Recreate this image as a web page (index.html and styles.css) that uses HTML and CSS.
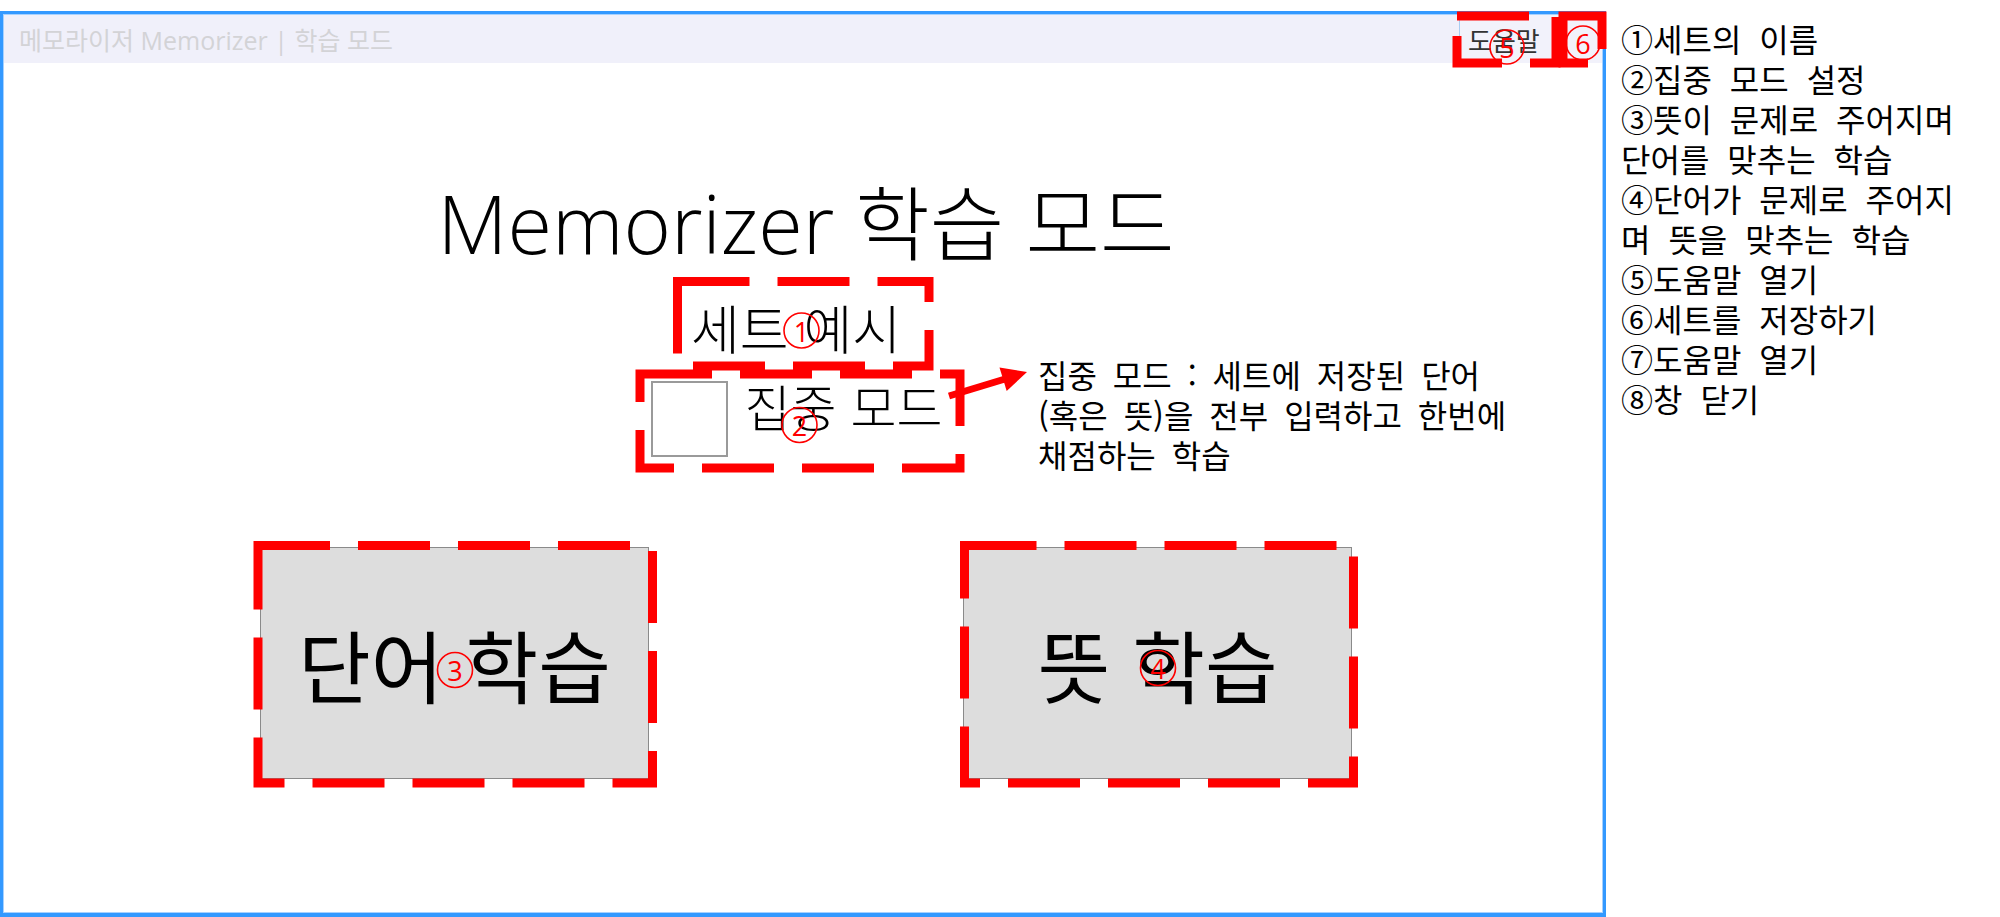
FILE: index.html
```html
<!DOCTYPE html>
<html lang="ko">
<head>
<meta charset="utf-8">
<title>Memorizer 학습 모드</title>
<link rel="stylesheet" href="styles.css">
</head>
<body>
<div class="page">
  <div class="window">
    <div class="titlebar">
      <span class="app-title">메모라이저 Memorizer | 학습 모드</span>
      <button class="help">도움말</button>
      <button class="save" aria-label="세트 저장"></button>
    </div>
    <main class="content">
      <h1 class="title">Memorizer 학습 모드</h1>
      <div class="set-name">세트 예시</div>
      <label class="focus"><span class="check"></span><span class="focus-label">집중 모드</span></label>
      <div class="modes">
        <button class="mode">단어 학습</button>
        <button class="mode">뜻 학습</button>
      </div>
    </main>
  </div>
  <aside class="legend">
    <p>①세트의 이름</p>
    <p>②집중 모드 설정</p>
    <p>③뜻이 문제로 주어지며<br>단어를 맞추는 학습</p>
    <p>④단어가 문제로 주어지<br>며 뜻을 맞추는 학습</p>
    <p>⑤도움말 열기</p>
    <p>⑥세트를 저장하기</p>
    <p>⑦도움말 열기</p>
    <p>⑧창 닫기</p>
  </aside>
  <p class="callout">집중 모드 : 세트에 저장된 단어<br>(혹은 뜻)을 전부 입력하고 한번에<br>채점하는 학습</p>
  <svg class="marks" width="2000" height="917" viewBox="0 0 2000 917">
    <g class="dash">
      <rect x="1457" y="16" width="99" height="47"/>
      <rect x="1563" y="16" width="39" height="47"/>
      <rect x="677.5" y="281.5" width="251.5" height="84.5"/>
      <rect x="640" y="374" width="320" height="94"/>
      <rect x="258" y="545.5" width="394.5" height="237.5"/>
      <rect x="964.5" y="545.5" width="389" height="237.5"/>
    </g>
    <path class="arrow-shaft" d="M949 396 L1005 379"/>
    <polygon class="arrow-head" points="1027,372 999.5,367.5 1006.7,391"/>
    <g class="num">
      <circle cx="801.5" cy="330.5" r="17.5"/><text x="801.5" y="331">1</text>
      <circle cx="799.5" cy="425" r="17.5"/><text x="799.5" y="425.5">2</text>
      <circle cx="455" cy="670" r="17.5"/><text x="455" y="670.5">3</text>
      <circle cx="1158" cy="668" r="17.5"/><text x="1158" y="668.5">4</text>
      <circle cx="1507" cy="47" r="17"/><text x="1507" y="47.5">5</text>
      <circle cx="1583" cy="43" r="17"/><text x="1583" y="43.5">6</text>
    </g>
  </svg>
</div>
</body>
</html>
```

FILE: styles.css
```css
* { box-sizing: border-box; }
html, body { margin: 0; padding: 0; background: #fff; }
body { font-family: "Noto Sans CJK KR", sans-serif; color: #000; }

.page {
  position: relative;
  width: 2000px;
  height: 917px;
  display: flex;
  align-items: flex-start;
  overflow: hidden;
}

.window {
  width: 1606px;
  height: 906px;
  margin-top: 11px;
  border: 3px solid #3399ff;
  border-bottom-width: 4px;
  padding: 1px;
  box-shadow: inset 0 0 0 1px #a6d1ff;
  display: flex;
  flex-direction: column;
  flex: none;
}

.titlebar {
  height: 48px;
  background: #f0f0fa;
  display: flex;
  align-items: stretch;
  flex: none;
}
.app-title {
  align-self: center;
  padding-left: 15px;
  font: 400 25px "Open Sans", "Noto Sans CJK KR", sans-serif;
  color: #d3d3d6;
  white-space: nowrap;
}
.help {
  margin-left: auto;
  width: 97px;
  border: 0;
  border-left: 1px solid #a8cdf2;
  background: #f2f2fb;
  padding: 0 0 0 8px;
  text-align: left;
  font: 400 26px "Noto Sans CJK KR", sans-serif;
  color: #333;
}
.save {
  width: 46px;
  border: 0;
  background: #f2f2fb;
  padding: 0;
}

.content {
  flex: 1;
  display: flex;
  flex-direction: column;
  align-items: center;
}

.title {
  margin: 112px 0 0 6px;
  font: 300 81px/96px "Open Sans", "Noto Sans CJK KR", sans-serif;
  white-space: nowrap;
}
.set-name {
  margin: 25px 14px 0 0;
  font: 300 53px/62px "Noto Sans CJK KR", sans-serif;
  white-space: nowrap;
}
.focus {
  margin: 23px 13px 0 0;
  display: flex;
  align-items: flex-start;
  gap: 17px;
}
.check {
  width: 77px;
  height: 76px;
  border: 2px solid #9a9a9a;
  background: #fff;
}
.focus-label {
  margin-top: -5px;
  font: 300 50px/58px "Noto Sans CJK KR", sans-serif;
  white-space: nowrap;
}

.modes {
  margin: 90px 0 0 6px;
  display: flex;
  gap: 314px;
}
.mode {
  width: 389px;
  height: 232px;
  background: #dddddd;
  border: 1px solid #8a8a8a;
  padding: 0;
  font: 400 79px "Noto Sans CJK KR", sans-serif;
  color: #000;
  white-space: nowrap;
}

.legend {
  padding: 18px 0 0 15px;
  font: 400 32px/40px "Noto Sans CJK KR", sans-serif;
  word-spacing: 9px;
  white-space: nowrap;
}
.legend p { margin: 0; }

.callout {
  position: absolute;
  left: 1038px;
  top: 354px;
  margin: 0;
  font: 400 32px/40px "Noto Sans CJK KR", sans-serif;
  word-spacing: 7px;
  white-space: nowrap;
}

.marks {
  position: absolute;
  left: 0;
  top: 0;
  pointer-events: none;
}
.dash rect {
  fill: none;
  stroke: #ff0000;
  stroke-width: 9;
  stroke-dasharray: 72 28;
}
.arrow-shaft { stroke: #ff0000; stroke-width: 7; fill: none; }
.arrow-head { fill: #ff0000; }
.num circle { fill: none; stroke: #ff0000; stroke-width: 1.6; }
.num text {
  fill: #ff0000;
  font: 400 27px "Open Sans", sans-serif;
  text-anchor: middle;
  dominant-baseline: central;
}
```
